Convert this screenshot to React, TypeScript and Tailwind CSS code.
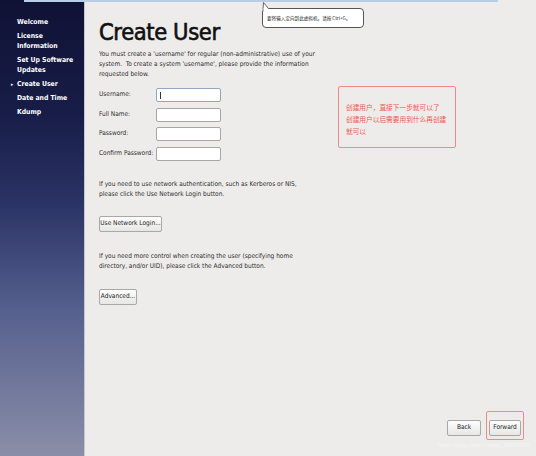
import React from "react";

const ui = { fontFamily: '"DejaVu Sans Condensed", "DejaVu Sans", "Noto Sans CJK SC", sans-serif' };
const cjk = { fontFamily: '"Noto Sans CJK SC", "DejaVu Sans", sans-serif' };

const steps = [
  { label: ["Welcome"] },
  { label: ["License", "Information"] },
  { label: ["Set Up Software", "Updates"] },
  { label: ["Create User"], current: true },
  { label: ["Date and Time"] },
  { label: ["Kdump"] },
];

function Field({ label, focused }: { label: string; focused?: boolean }) {
  return (
    <div className="flex items-center h-[14px]">
      <span className="w-[57px] text-[6.5px] text-[#2e2e2e]">{label}</span>
      <div
        className={
          "w-[65px] h-[14px] bg-white rounded-[2px] border " +
          (focused ? "border-[#8fa6c4]" : "border-[#a6a6a6]")
        }
      >
        {focused && <div className="ml-[3px] mt-[3px] w-px h-[7px] bg-[#333]" />}
      </div>
    </div>
  );
}

function Btn({ children, className = "" }: { children: React.ReactNode; className?: string }) {
  return (
    <div
      className={
        "h-[16px] px-[3px] flex items-center justify-center whitespace-nowrap text-[6.5px] text-[#222] rounded-[2px] border border-[#a8a8a8] bg-[linear-gradient(#fdfdfd,#e6e6e4)] " +
        className
      }
    >
      {children}
    </div>
  );
}

export default function App() {
  return (
    <div className="relative w-[536px] h-[456px] flex overflow-hidden bg-[#edecea]" style={ui}>
      <aside className="w-[85px] shrink-0 bg-[linear-gradient(180deg,#0f1234_0%,#181d48_25%,#2b3466_45%,#56608e_68%,#8a8ea8_100%)] border-r border-[#c4c4d4] pt-[17px]">
        <ul className="flex flex-col gap-[4px] text-white font-bold text-[6.8px] leading-[10px]">
          {steps.map((s) => (
            <li key={s.label[0]} className="relative pl-[17px]">
              {s.current && <span className="absolute left-[11px] top-0 text-[5px]">▸</span>}
              {s.label.map((l) => (
                <div key={l}>{l}</div>
              ))}
            </li>
          ))}
        </ul>
      </aside>

      <main className="flex-1 flex flex-col pl-[14px] pt-[18px] pb-[20px] pr-[15px]">
        <h1 className="text-[23.5px] leading-[28px] text-[#111] tracking-[-0.4px] [-webkit-text-stroke:0.6px_#111]">
          Create User
        </h1>
        <p className="mt-[3px] w-[230px] text-[6.5px] leading-[10px] text-[#2e2e2e]">
          You must create a 'username' for regular (non-administrative) use of your<br />
          system.&nbsp; To create a system 'username', please provide the information<br />
          requested below.
        </p>

        <div className="mt-[9px] flex flex-col gap-[5.5px]">
          <Field label="Username:" focused />
          <Field label="Full Name:" />
          <Field label="Password:" />
          <Field label="Confirm Password:" />
        </div>

        <p className="mt-[18px] w-[212px] text-[6.5px] leading-[10px] text-[#2e2e2e]">
          If you need to use network authentication, such as Kerberos or NIS, please click the Use Network Login button.
        </p>
        <Btn className="mt-[17px] w-[63px] self-start">Use Network Login...</Btn>

        <p className="mt-[19px] w-[212px] text-[6.5px] leading-[10px] text-[#2e2e2e]">
          If you need more control when creating the user (specifying home directory, and/or UID), please click the Advanced button.
        </p>
        <Btn className="mt-[18px] w-[38px] self-start">Advanced...</Btn>

        <div className="mt-auto flex justify-end gap-[8px]">
          <Btn className="w-[34px]">Back</Btn>
          <Btn className="w-[32px]">Forward</Btn>
        </div>
      </main>

      {/* top highlight bar */}
      <div className="absolute left-[24px] top-0 w-[474px] h-[2px] bg-[#b9cde6]" />

      {/* tooltip balloon */}
      <div className="absolute left-[262px] top-[8px] w-[102px] h-[20px] bg-white border border-[#555] rounded-[4px] flex items-center pl-[4px]">
        <span className="text-[4.6px] text-[#222] whitespace-nowrap" style={cjk}>
          要将输入定向到此虚拟机，请按 Ctrl+G。
        </span>
      </div>
      <svg className="absolute left-[262px] top-[2px]" width="10" height="8" viewBox="0 0 10 8">
        <path d="M1 7.5 L1.5 0.5 L6.5 6.5" fill="#fff" stroke="#444" strokeWidth="0.8" />
        <rect x="1.6" y="6.2" width="4.6" height="2" fill="#fff" />
      </svg>

      {/* annotation box */}
      <div className="absolute left-[338px] top-[86px] w-[118px] h-[62px] border border-[#f08a86] rounded-[2px] pl-[7px] pt-[14px]">
        <div className="text-[6.7px] leading-[12px] text-[#ee5a55] w-[106px]" style={cjk}>
          创建用户，直接下一步就可以了<br />创建用户以后需要用到什么再创建就可以
        </div>
      </div>

      {/* forward highlight */}
      <div className="absolute left-[486px] top-[411px] w-[38px] h-[29px] border border-[#f08a86] rounded-[2px]" />

      {/* watermark */}
      <div className="absolute left-[438px] top-[441px] text-[6px] text-[#f4f4f2]" style={{ fontFamily: '"Liberation Sans", sans-serif' }}>
        https://blog.csdn.net/qq_38007926
      </div>
    </div>
  );
}
